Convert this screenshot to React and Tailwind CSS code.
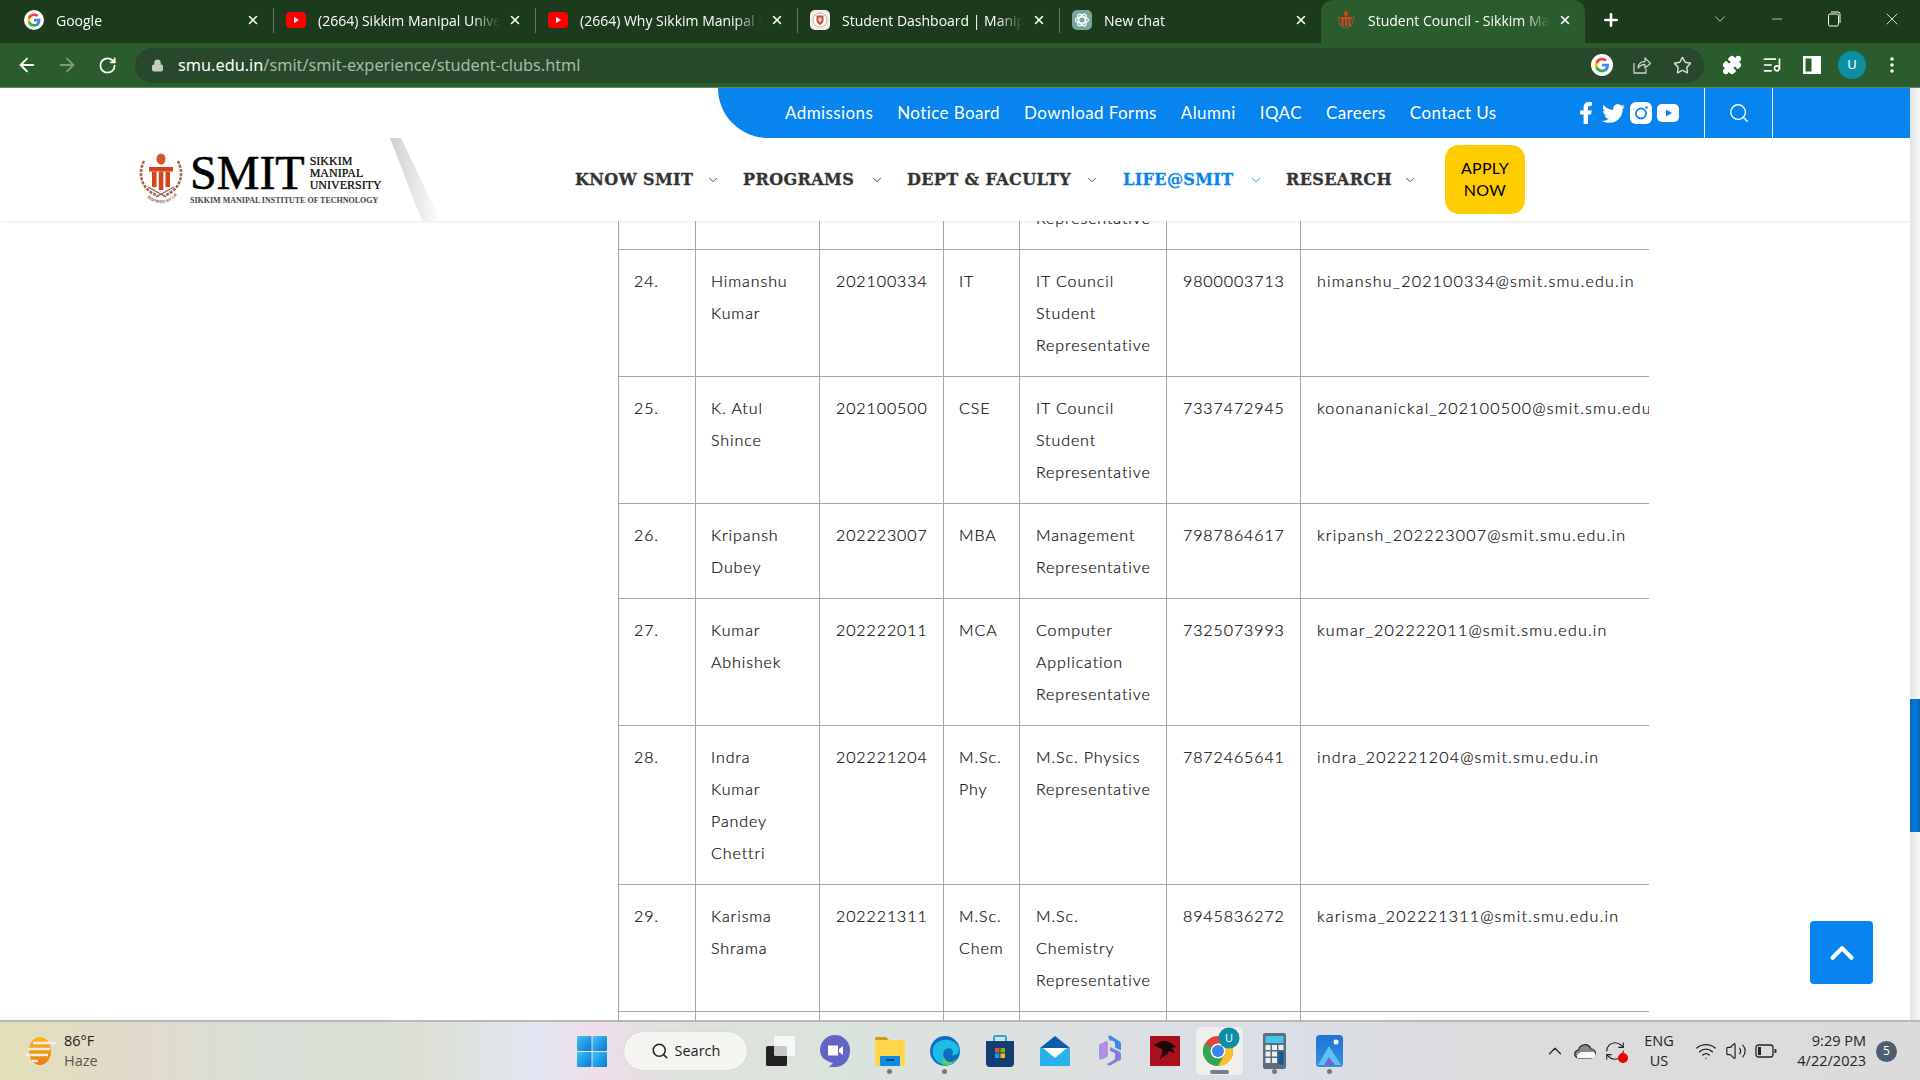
import React from 'react';
import { ArrowLeft, ArrowRight, RotateCw, Lock, Star, Puzzle, ListMusic, Search, X, Plus, ChevronDown, ChevronUp, Minus, Wifi, Volume2, RefreshCw } from 'lucide-react';
import { FaFacebookF, FaTwitter } from 'react-icons/fa';

const GoogleG = ({ s = 20 }) => (
  <svg width={s} height={s} viewBox="0 0 24 24" className="rounded-full bg-white shrink-0">
    <g transform="translate(3.6 3.6) scale(.7)">
      <path fill="#4285F4" d="M23 12.3c0-.8-.1-1.600-.2-2.300H12v4.400h6.200a5.300 5.300 0 0 1-2.300 3.500v2.900h3.700c2.200-2 3.400-5 3.400-8.500z" />
      <path fill="#34A853" d="M12 23.500c3.100 0 5.700-1 7.600-2.800l-3.700-2.900c-1 .7-2.300 1.100-3.900 1.100-3 0-5.500-2-6.400-4.700H1.800v3A11.500 11.500 0 0 0 12 23.500z" />
      <path fill="#FBBC05" d="M5.600 14.200a6.900 6.900 0 0 1 0-4.400v-3H1.800a11.500 11.500 0 0 0 0 10.400l3.800-3z" />
      <path fill="#EA4335" d="M12 5.100c1.700 0 3.200.6 4.400 1.700l3.300-3.300A11.500 11.500 0 0 0 1.800 6.800l3.800 3C6.500 7.100 9 5.100 12 5.100z" />
    </g>
  </svg>
);

const YouTubeFav = () => (
  <svg width="20" height="20" viewBox="0 0 20 20" className="shrink-0">
    <rect x="0" y="2" width="20" height="16" rx="4" fill="#f00" />
    <path d="M8 7l5 3-5 3z" fill="#fff" />
  </svg>
);

const Crest = ({ s = 20 }) => (
  <svg width={s} height={s} viewBox="0 0 20 20" className="shrink-0">
    <rect width="20" height="20" rx="5" fill="#f2ece8" />
    <circle cx="10" cy="10" r="7" fill="#fff" stroke="#c9b8a8" strokeWidth="1" />
    <path d="M6.500 5.500h7v5c0 2-1.800 3.500-3.500 4.500-1.700-1-3.500-2.500-3.500-4.500z" fill="#c4513a" />
    <path d="M8.500 7.500h3v3l-1.500 2-1.500-2z" fill="#f3d9a8" />
  </svg>
);

const GptFav = () => (
  <svg width="20" height="20" viewBox="0 0 20 20" className="shrink-0">
    <rect width="20" height="20" rx="5" fill="#79a89a" />
    <g fill="none" stroke="#fff" strokeWidth="1.200">
      <ellipse cx="10" cy="10" rx="6.500" ry="3.200" />
      <ellipse cx="10" cy="10" rx="6.500" ry="3.200" transform="rotate(60 10 10)" />
      <ellipse cx="10" cy="10" rx="6.500" ry="3.200" transform="rotate(120 10 10)" />
    </g>
  </svg>
);

const SmitFav = () => (
  <svg width="20" height="20" viewBox="0 0 20 20" className="shrink-0">
    <ellipse cx="10" cy="3.500" rx="2" ry="2.500" fill="#d8431c" />
    <path d="M4 7h12v2H4zM5.500 9h2v7h-2zM9 9h2v7H9zM12.500 9h2v7h-2z" fill="#d8431c" />
    <path d="M2.500 6c-1 6 2 11 7 12M17.500 6c1 6-2 11-7 12" fill="none" stroke="#7a5a48" strokeWidth="1.300" />
  </svg>
);

const tabs = [
  { t: 'Google', icon: <GoogleG />, sep: false },
  { t: '(2664) Sikkim Manipal University', icon: <YouTubeFav />, sep: true },
  { t: '(2664) Why Sikkim Manipal University', icon: <YouTubeFav />, sep: true },
  { t: 'Student Dashboard | Manipal University', icon: <Crest />, sep: true },
  { t: 'New chat', icon: <GptFav />, sep: true },
];

const Tab = ({ t, icon, active }) => (
  <div className={`h-[43px] flex items-center shrink-0 ${active ? 'w-[264px] pl-[15px] pr-[12px] bg-[#2b5c2d] rounded-t-[12px]' : 'w-[261px] pl-[12px] pr-[12px]'}`}>
    <div className="mb-[3px] flex">{icon}</div>
    <div className="ml-[12px] w-[182px] mb-[3px] overflow-hidden whitespace-nowrap text-[14px] text-white [font-family:'Open_Sans',sans-serif] [mask-image:linear-gradient(90deg,#000_85%,transparent)]">{t}</div>
    <div className="ml-auto w-[16px] mb-[3px] flex justify-center"><X size={14} strokeWidth={2.600} color="#fff" /></div>
  </div>
);

const Sep = ({ show }) => <div className={`w-px h-[25px] mb-[3px] shrink-0 ${show ? 'bg-[#5f7660]' : ''}`} />;

const TabStrip = () => (
  <div className="h-[43px] bg-[#1c3a1c] flex items-center pl-[12px] text-white shrink-0">
    {tabs.map((x, i) => (
      <React.Fragment key={i}>
        {i > 0 && <Sep show />}
        <Tab t={x.t} icon={x.icon} />
      </React.Fragment>
    ))}
    <Tab t="Student Council - Sikkim Manipal University" icon={<SmitFav />} active />
    <div className="ml-[14px] w-[24px] mb-[3px] flex justify-center"><Plus size={20} strokeWidth={3} color="#fff" /></div>
    <div className="ml-[87px] w-[20px] mb-[6px] flex justify-center"><ChevronDown size={18} strokeWidth={1} color="#e8efe8" /></div>
    <div className="ml-[37px] w-[20px] mb-[6px] flex justify-center"><Minus size={16} strokeWidth={1} color="#fff" /></div>
    <div className="ml-[37px] w-[20px] mb-[6px] flex justify-center">
      <svg width="14" height="16" viewBox="0 0 14 16" fill="none" stroke="#fff"><rect x="1.500" y="3" width="10" height="12" rx="1.500" /><path d="M4 1h7a2 2 0 0 1 2 2v9" /></svg>
    </div>
    <div className="ml-[38px] w-[20px] mb-[6px] flex justify-center"><X size={20} strokeWidth={1} color="#fff" /></div>
  </div>
);

const Slot = ({ children, w = 'w-[40px]' }) => <div className={`${w} h-[35px] flex items-center justify-center shrink-0`}>{children}</div>;

const Toolbar = () => (
  <div className="h-[45px] bg-[#2b5c2d] border-b border-[#5f8a60] flex items-center pl-[7px] shrink-0">
    <Slot><ArrowLeft size={22} strokeWidth={2} color="#fff" /></Slot>
    <Slot><ArrowRight size={22} strokeWidth={2} color="#7f9c80" /></Slot>
    <Slot><RotateCw size={19} strokeWidth={2.200} color="#fff" /></Slot>
    <div className="ml-[8px] w-[1569px] h-[35px] rounded-full bg-[#27482a] flex items-center pl-[16px] pr-[2px]">
      <Lock size={13} fill="#c3ccc3" color="#c3ccc3" strokeWidth={2} className="shrink-0" />
      <div className="ml-[14px] text-[16.300px] whitespace-nowrap text-white [font-family:'Noto_Sans',sans-serif]">smu.edu.in<span className="text-[#a9bba9]">/smit/smit-experience/student-clubs.html</span></div>
      <div className="ml-auto flex">
        <Slot><GoogleG s={22} /></Slot>
        <Slot>
          <svg width="20" height="20" viewBox="0 0 20 20" fill="none" stroke="#c8d3c8" strokeWidth="1.300" strokeLinejoin="round"><path d="M2 8v10h12v-4" /><path d="M6 13c0-4 3-6.500 7-6.500V3l5.500 5.500L13 13V9.500c-3 0-5 1-7 3.500z" /></svg>
        </Slot>
        <Slot><Star size={19} strokeWidth={1.800} color="#d8e0d8" /></Slot>
      </div>
    </div>
    <div className="ml-[8px] flex">
      <Slot><Puzzle size={20} fill="#fff" color="#fff" /></Slot>
      <Slot><ListMusic size={20} color="#fff" strokeWidth={2} /></Slot>
      <Slot>
        <svg width="18" height="18" viewBox="0 0 18 18"><path fillRule="evenodd" d="M0 0h18v18H0zM2.500 2.500v13h6v-13z" fill="#fff" /></svg>
      </Slot>
      <Slot><div className="w-[28px] h-[28px] rounded-full bg-[#0c8ea5] text-[13px] text-white flex items-center justify-center">U</div></Slot>
      <Slot>
        <svg width="4" height="18" viewBox="0 0 4 18" fill="#fff"><circle cx="2" cy="3" r="1.800" /><circle cx="2" cy="9" r="1.800" /><circle cx="2" cy="15" r="1.800" /></svg>
      </Slot>
    </div>
  </div>
);

const Emblem = () => (
  <svg width="46" height="53" viewBox="0 0 46 53" className="shrink-0">
    <ellipse cx="23" cy="6" rx="4.500" ry="5.500" fill="#d8542a" />
    <path d="M11 14h24v4.500H11z" fill="#d8431c" />
    <path d="M14 18.500h4.500V34H14zM20.800 18.500h4.500V37h-4.500zM27.500 18.500H32V34h-4.500z" fill="#d8431c" />
    <g fill="none" stroke="#a5644f" strokeWidth="2.600" strokeDasharray="3 1.200">
      <path d="M6 8C0 20 2 36 20 43" />
      <path d="M40 8c6 12 4 28-14 35" />
    </g>
    <path d="M10 34l18 10M36 34L18 44" stroke="#8c5a48" strokeWidth="1.200" />
    <path id="arc-smit" d="M7 42c8 11 24 11 32 0" fill="none" />
    <text fontSize="4.300" fill="#9a6b5a" fontFamily="'Liberation Sans',sans-serif" fontWeight="700">
      <textPath href="#arc-smit" startOffset="8%">INSPIRED BY LIFE</textPath>
    </text>
  </svg>
);

const Logo = () => (
  <div className="w-[575px] h-[83px] shrink-0 relative pl-[138px] flex items-center">
    <Emblem />
    <div className="ml-[6px] pt-[2px] flex flex-col [font-family:'Liberation_Serif',serif] text-black">
      <div className="flex items-center h-[36px]">
        <div className="text-[48px] leading-[36px] [-webkit-text-stroke:0.6px_#000]">SMIT</div>
        <div className="ml-[5px] flex flex-col text-[12px] leading-[12px] text-[#222] font-medium [text-shadow:0_0_.4px_#222]">
          <span>SIKKIM</span><span>MANIPAL</span><span>UNIVERSITY</span>
        </div>
      </div>
      <div className="text-[8px] font-bold leading-[10px] mt-[5px] text-[#444] whitespace-nowrap">SIKKIM MANIPAL INSTITUTE OF TECHNOLOGY</div>
    </div>
    <svg width="52" height="83" viewBox="0 0 52 83" className="absolute left-[389px] top-0">
      <defs><linearGradient id="sl" x1="0" x2="1" y1="0" y2="0"><stop offset="0" stopColor="#cfcfcf" /><stop offset="1" stopColor="#fff" /></linearGradient></defs>
      <path d="M1 0 L33 83 L52 83 L12 0 Z" fill="url(#sl)" />
    </svg>
  </div>
);

const navItems = [
  ['KNOW SMIT', 'w-[168px] pr-[26px]', false],
  ['PROGRAMS', 'w-[164px] pr-[26px]', false],
  ['DEPT & FACULTY', 'w-[216px] pr-[27px]', false],
  ['LIFE@SMIT', 'w-[163px] pr-[26px]', true],
  ['RESEARCH', 'w-[159px] pr-[31px]', false],
];

const topLinks = ['Admissions', 'Notice Board', 'Download Forms', 'Alumni', 'IQAC', 'Careers', 'Contact Us'];

const Header = () => (
  <div className="absolute top-0 left-0 right-0 bg-white shadow-[0_1px_3px_rgba(0,0,0,0.08)] z-10">
    <div className="h-[50px] flex justify-end">
      <div className="w-[1192px] h-[50px] bg-[#0784ee] rounded-bl-[50px] flex items-center pl-[67px] text-white text-[17px] tracking-[0.4px] [font-family:Lato,sans-serif]">
        <div className="flex gap-[24px] w-[796px] whitespace-nowrap">
          {topLinks.map((l) => <span key={l}>{l}</span>)}
        </div>
        <div className="ml-[-6px] flex items-center gap-[5px] w-[130px]">
          <FaFacebookF size={22} color="#fff" />
          <FaTwitter size={23} color="#fff" />
          <svg width="22" height="22" viewBox="0 0 22 22">
            <rect width="22" height="22" rx="6" fill="#fff" />
            <circle cx="11" cy="11.500" r="5" fill="none" stroke="#0784ee" strokeWidth="1.800" />
            <circle cx="16.500" cy="5.500" r="1.300" fill="#0784ee" />
          </svg>
          <svg width="22" height="18" viewBox="0 0 22 18">
            <rect width="22" height="18" rx="5" fill="#fff" />
            <path d="M9 5.500l6 3.500-6 3.500z" fill="#0784ee" />
          </svg>
        </div>
        <div className="ml-[-1px] w-[69px] h-[50px] border-x border-white flex items-center justify-center">
          <Search size={22} strokeWidth={1.500} color="#fff" />
        </div>
      </div>
    </div>
    <div className="h-[83px] flex items-center">
      <Logo />
      {navItems.map(([t, c, act]) => (
        <div key={t} className={`${c} flex items-center justify-between shrink-0 ${act ? 'text-[#0784ee]' : 'text-[#333]'}`}>
          <span className="text-[16px] font-bold tracking-[0.4px] whitespace-nowrap [-webkit-text-stroke:0.3px_currentColor] [font-family:'DejaVu_Serif',serif]">{t}</span>
          <ChevronDown size={14} strokeWidth={1.500} className="mr-[-3px]" />
        </div>
      ))}
      <div className="w-[80px] h-[69px] pb-[2px] bg-[#ffcc00] rounded-[14px] flex items-center justify-center text-center text-[16px] leading-[22px] text-black [font-family:Lato,sans-serif] tracking-[0.3px]">APPLY<br />NOW</div>
    </div>
  </div>
);

const rows = [
  ['', [''], '', [''], ['', '', 'Representative'], '', ''],
  ['24.', ['Himanshu', 'Kumar'], '202100334', ['IT'], ['IT Council', 'Student', 'Representative'], '9800003713', 'himanshu_202100334@smit.smu.edu.in'],
  ['25.', ['K. Atul', 'Shince'], '202100500', ['CSE'], ['IT Council', 'Student', 'Representative'], '7337472945', 'koonananickal_202100500@smit.smu.edu.in'],
  ['26.', ['Kripansh', 'Dubey'], '202223007', ['MBA'], ['Management', 'Representative'], '7987864617', 'kripansh_202223007@smit.smu.edu.in'],
  ['27.', ['Kumar', 'Abhishek'], '202222011', ['MCA'], ['Computer', 'Application', 'Representative'], '7325073993', 'kumar_202222011@smit.smu.edu.in'],
  ['28.', ['Indra', 'Kumar', 'Pandey', 'Chettri'], '202221204', ['M.Sc.', 'Phy'], ['M.Sc. Physics', 'Representative'], '7872465641', 'indra_202221204@smit.smu.edu.in'],
  ['29.', ['Karisma', 'Shrama'], '202221311', ['M.Sc.', 'Chem'], ['M.Sc.', 'Chemistry', 'Representative'], '8945836272', 'karisma_202221311@smit.smu.edu.in'],
  ['', [''], '', [''], [''], '', ''],
];

const Lines = ({ v }) => v.map((l, i) => <div key={i} className="h-[32px] whitespace-nowrap">{l}</div>);
const tdc = 'border border-[#a6a6a6] pr-[15px] py-[15px] align-top';

const DataTable = () => (
  <div className="ml-[618px] w-[1031px] pt-[34px] overflow-hidden">
    <table className="table-fixed border-collapse w-[1082px] text-[16px] leading-[32px] tracking-[0.9px] text-black font-light [-webkit-text-stroke:0.2px_#222] [font-family:Lato,sans-serif]">
      <colgroup>
        <col className="w-[77px]" /><col className="w-[124px]" /><col className="w-[124px]" /><col className="w-[76px]" /><col className="w-[147px]" /><col className="w-[134px]" /><col className="w-[400px]" />
      </colgroup>
      <tbody>
        {rows.map((r, i) => (
          <tr key={i}>
            <td className={`${tdc} pl-[15px]`}>{r[0]}</td>
            <td className={`${tdc} pl-[15px]`}><Lines v={r[1]} /></td>
            <td className={`${tdc} pl-[16px]`}>{r[2]}</td>
            <td className={`${tdc} pl-[15px]`}><Lines v={r[3]} /></td>
            <td className={`${tdc} pl-[16px]`}><Lines v={r[4]} /></td>
            <td className={`${tdc} pl-[16px]`}>{r[5]}</td>
            <td className={`${tdc} pl-[16px] whitespace-nowrap tracking-[1.2px]`}>{r[6]}</td>
          </tr>
        ))}
      </tbody>
    </table>
  </div>
);

const TB = ({ children, w = 'w-[55px]', dot, active }) => (
  <div className={`${w} h-[60px] flex flex-col items-center justify-center relative shrink-0`}>
    {active && <div className="absolute left-[4px] right-[4px] top-[6px] bottom-[6px] bg-[#f0efec] rounded-[5px]" />}
    <div className="relative">{children}</div>
    {dot && <div className="absolute bottom-[7px] w-[5px] h-[5px] rounded-full bg-[#777]" />}
    {active && <div className="absolute bottom-[7px] w-[19px] h-[4px] rounded-full bg-[#6f8090]" />}
  </div>
);

const Win11 = () => (
  <svg width="30" height="31" viewBox="0 0 30 31">
    <defs><linearGradient id="w1" x1="0" y1="0" x2="1" y2="1"><stop offset="0" stopColor="#3fc4f4" /><stop offset="1" stopColor="#0678d4" /></linearGradient></defs>
    <rect width="14.500" height="15" rx="1" fill="url(#w1)" /><rect x="15.500" width="14.500" height="15" rx="1" fill="url(#w1)" />
    <rect y="16" width="14.500" height="15" rx="1" fill="url(#w1)" /><rect x="15.500" y="16" width="14.500" height="15" rx="1" fill="url(#w1)" />
  </svg>
);

const Taskbar = () => (
  <div className="h-[60px] border-t-2 border-[#b8b8b8] flex items-center shrink-0 text-[#222] [font-family:'Open_Sans',sans-serif] bg-[linear-gradient(90deg,#e2e0b6_0%,#e3dacb_6%,#d8dfd6_14%,#dce0d4_22%,#e3e7f3_28%,#efdde9_31%,#dde3dc_36%,#dbe3dd_44%,#dde0e2_58%,#dadee6_66%,#dcdcdc_80%,#dbdbdb_100%)]">
    <div className="w-[564px] pl-[24px] flex items-center shrink-0">
      <svg width="32" height="30" viewBox="0 0 32 30">
        <defs><linearGradient id="sun" x1="0" x2="0" y1="0" y2="1"><stop offset="0" stopColor="#fbb81c" /><stop offset="1" stopColor="#ee7a12" /></linearGradient></defs>
        <ellipse cx="16" cy="15" rx="11" ry="14" fill="url(#sun)" />
        <path d="M9 7h23M4 13h16M18 13h8M2 19h22M8 25h6" stroke="#f2efe2" strokeWidth="2.400" />
      </svg>
      <div className="ml-[8px] text-[14.500px] leading-[20px]"><div>86°F</div><div className="text-[#555]">Haze</div></div>
    </div>
    <TB><Win11 /></TB>
    <div className="ml-[5px] w-[123px] h-[38px] rounded-full bg-[#f5f5f2] flex items-center justify-center gap-[6px] shrink-0 text-[14.500px] shadow-[0_0_1px_rgba(0,0,0,0.2)]">
      <Search size={18} strokeWidth={2} color="#222" />Search
    </div>
    <div className="ml-[5px] flex">
      <TB>
        <svg width="30" height="30" viewBox="0 0 30 30"><rect x="1" y="10" width="21" height="20" rx="1.500" fill="#222" /><rect x="9" y="0" width="21" height="20" rx="1.500" fill="#fff" fillOpacity=".75" /></svg>
      </TB>
      <TB>
        <svg width="30" height="32" viewBox="0 0 30 32"><path d="M15 0a15 15 0 0 1 15 15c0 10-6 17-15 17h-6l4-4C5 26 0 22 0 15A15 15 0 0 1 15 0z" fill="#6264c7" /><path d="M8 10.500h10v10H8zM19 14l4-3v9l-4-3z" fill="#fff" /></svg>
      </TB>
      <TB dot>
        <svg width="30" height="30" viewBox="0 0 30 30"><path d="M0 3a2 2 0 0 1 2-2h9l3 3h-14z" fill="#d19a14" /><rect y="4" width="30" height="26" rx="1.500" fill="#ffd54a" /><rect x="5" y="20" width="20" height="10" rx="1" fill="#0d8be0" /><rect x="11" y="23" width="8" height="2" fill="#054c84" /></svg>
      </TB>
      <TB dot>
        <svg width="30" height="30" viewBox="0 0 30 30"><circle cx="15" cy="15" r="15" fill="#0d6ec0" /><path d="M3 12C6 2 24 0 29 12c1 5-3 8-7 7 3-5-2-8-6-6-5 3-3 11 4 14C10 31 1 24 3 12z" fill="#1ebbe4" /><path d="M14 22c3 5 10 6 14-1-2 6-9 10-15 8-2-2-1-5 1-7z" fill="#53ce73" /></svg>
      </TB>
      <TB>
        <svg width="30" height="32" viewBox="0 0 30 32"><path d="M9 6V2.500A1.500 1.500 0 0 1 10.500 1h9A1.500 1.500 0 0 1 21 2.500V6" fill="none" stroke="#2aa4e6" strokeWidth="2" /><path d="M1 6h28v22a4 4 0 0 1-4 4H5a4 4 0 0 1-4-4z" fill="#123f72" /><rect x="10" y="13" width="4.500" height="4.500" fill="#f25022" /><rect x="15.500" y="13" width="4.500" height="4.500" fill="#7fba00" /><rect x="10" y="18.500" width="4.500" height="4.500" fill="#00a4ef" /><rect x="15.500" y="18.500" width="4.500" height="4.500" fill="#ffb900" /></svg>
      </TB>
      <TB>
        <svg width="30" height="30" viewBox="0 0 30 30"><path d="M15 0l15 12v18H0V12z" fill="#0b5cab" /><path d="M0 12h30v18H0z" fill="#2cb0ea" /><path d="M3 12h24l-12 10z" fill="#fff" /></svg>
      </TB>
      <TB>
        <svg width="28" height="32" viewBox="0 0 28 32"><path d="M12 1.500a3 3 0 0 1 4 0l6 4a4 4 0 0 1 3 4v6l-6-3V8c-1-2-3-3-5-2z" fill="#3c8ce6" /><path d="M3 9.500l6-3c2-1 3 0 3 2v13l-6 3a2 2 0 0 1-3-2z" fill="#b18fe4" /><path d="M14 12l8 4a4 4 0 0 1 3 4v3a3 3 0 0 1-3 3l-7 4a3 3 0 0 1-4-1l7-4c1-1 1-2 1-3v-4l-5-2z" fill="#8a7ad8" /></svg>
      </TB>
      <TB>
        <svg width="30" height="30" viewBox="0 0 30 30"><rect width="30" height="30" fill="#a90f1c" /><path d="M4 9c6-5 12-5 17-2l5 4-4 1 3 5-6-2c-1 4-5 5-9 8 1-4 3-7 2-10-2-1-5-2-8-4z" fill="#1c0808" /></svg>
      </TB>
      <TB active>
        <svg width="38" height="42" viewBox="0 0 38 42" className="mt-[-7px] ml-[3px]">
          <circle cx="16" cy="24" r="15" fill="#e2443a" />
          <path d="M16 24L3 16.500A15 15 0 0 0 16 39l7.500-13z" fill="#2fa84f" />
          <path d="M16 39a15 15 0 0 0 13-22.500H16l7.500 9.500z" fill="#fbc02d" />
          <circle cx="16" cy="24" r="7.500" fill="#fff" /><circle cx="16" cy="24" r="6" fill="#3f83e8" />
          <circle cx="27" cy="11" r="10.500" fill="#0c8ea5" />
          <text x="27" y="15" fontSize="11" fill="#fff" textAnchor="middle" fontFamily="'Open Sans',sans-serif">U</text>
        </svg>
      </TB>
      <TB dot>
        <svg width="23" height="36" viewBox="0 0 23 36"><rect width="23" height="36" rx="2" fill="#5c6e7c" /><rect x="2.500" y="3" width="18" height="7" fill="#43c6ec" /><g fill="#e8eef2"><rect x="2.500" y="12" width="5" height="5" /><rect x="9" y="12" width="5" height="5" /><rect x="15.500" y="12" width="5" height="5" /><rect x="2.500" y="18.500" width="5" height="5" /><rect x="9" y="18.500" width="5" height="5" /><rect x="2.500" y="25" width="5" height="5" /><rect x="9" y="25" width="5" height="5" /></g><rect x="15.500" y="18.500" width="5" height="13" fill="#145a96" /></svg>
      </TB>
      <TB dot>
        <svg width="27" height="32" viewBox="0 0 27 32"><defs><linearGradient id="ph" x1="0" x2="0" y1="0" y2="1"><stop offset="0" stopColor="#1c74d6" /><stop offset="1" stopColor="#3a8de0" /></linearGradient></defs><rect width="27" height="32" rx="3.500" fill="url(#ph)" /><circle cx="20" cy="7" r="2.500" fill="#fff" /><path d="M2 30L13 11l12 19z" fill="#59c4ee" /><path d="M8 30l5-8 6 8z" fill="#7b63c8" /></svg>
      </TB>
    </div>
    <div className="ml-[183px] flex items-center shrink-0">
      <Slot w="w-[30px]"><ChevronUp size={22} strokeWidth={1.300} color="#222" /></Slot>
      <Slot w="w-[30px]">
        <svg width="22" height="16" viewBox="0 0 22 16"><path d="M5 15a4 4 0 0 1-.5-8A6.500 6.500 0 0 1 17 6a4.500 4.500 0 0 1 0 9z" fill="#888" stroke="#222" strokeWidth="1.200" /><path d="M3 15h15a3 3 0 0 0 1-6H8a5 5 0 0 0-5 6z" fill="#f8f8f8" /></svg>
      </Slot>
      <Slot w="w-[30px]">
        <div className="relative">
          <RefreshCw size={22} strokeWidth={1.200} color="#222" />
          <div className="absolute right-[-2px] bottom-[-1px] w-[10px] h-[10px] rounded-full bg-[#f00000]" />
        </div>
      </Slot>
      <div className="ml-[6px] w-[46px] text-center text-[14.500px] leading-[20px]"><div>ENG</div><div>US</div></div>
      <div className="ml-[9px] flex gap-[1px] items-center">
        <Slot w="w-[29px]"><Wifi size={22} strokeWidth={1.500} color="#222" /></Slot>
        <Slot w="w-[29px]"><Volume2 size={22} strokeWidth={1.300} color="#222" /></Slot>
        <Slot w="w-[30px]">
          <svg width="22" height="14" viewBox="0 0 22 14" fill="none" stroke="#222" strokeWidth="1.300"><rect x="1" y="1" width="17" height="12" rx="2.500" /><rect x="3" y="3" width="3" height="8" fill="#222" stroke="none" /><path d="M20.500 5v4" strokeWidth="1.800" /></svg>
        </Slot>
      </div>
      <div className="w-[85px] text-right text-[14.500px] leading-[20px]"><div>9:29 PM</div><div>4/22/2023</div></div>
      <div className="ml-[10px] w-[21px] h-[21px] rounded-full bg-[#4d5f6e] text-white text-[12px] flex items-center justify-center">5</div>
    </div>
  </div>
);

export default function App() {
  return (
    <div className="w-[1920px] h-[1080px] flex flex-col overflow-hidden bg-white [font-family:'Noto_Sans',sans-serif]">
      <TabStrip />
      <Toolbar />
      <div className="flex-1 min-h-0 flex">
        <div className="flex-1 relative overflow-hidden">
          <Header />
          <DataTable />
          <div className="absolute left-[1810px] top-[833px] w-[63px] h-[63px] rounded-[4px] bg-[#0784ee] flex items-center justify-center">
            <ChevronUp size={38} strokeWidth={2.600} color="#fff" />
          </div>
        </div>
        <div className="w-[10px] shrink-0 bg-[linear-gradient(90deg,#e4e4e4,#f8f8f8)] pt-[611px]">
          <div className="h-[133px] bg-[linear-gradient(90deg,#0168bf,#0a78d8,#0168bf)]" />
        </div>
      </div>
      <Taskbar />
    </div>
  );
}
